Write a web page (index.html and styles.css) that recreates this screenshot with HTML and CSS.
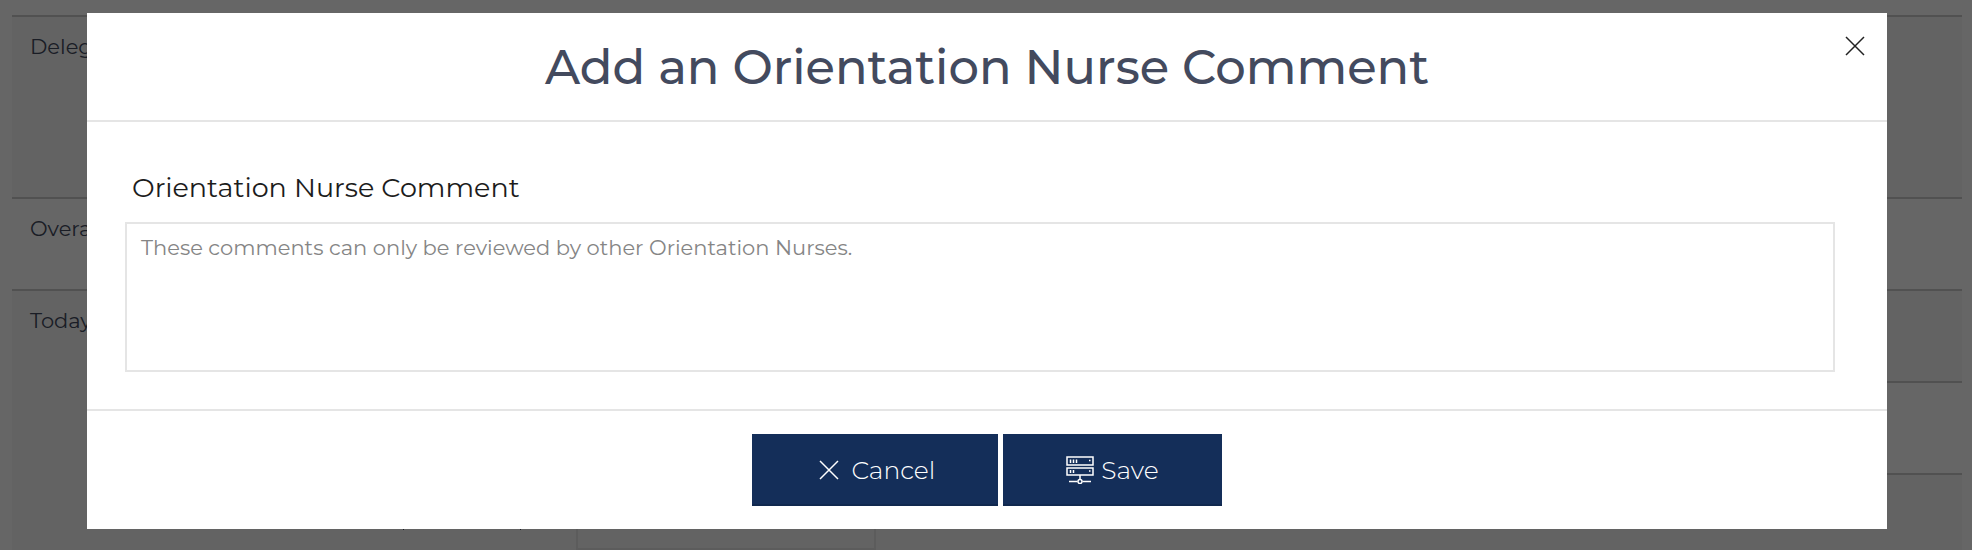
FILE: index.html
```html
<!DOCTYPE html>
<html lang="en">
<head>
<meta charset="utf-8">
<title>Add an Orientation Nurse Comment</title>
<link rel="stylesheet" href="styles.css">
</head>
<body>
<main class="page">
  <table class="record">
    <tr class="record-row tall striped"><th scope="row">Delegation</th><td></td></tr>
    <tr class="record-row"><th scope="row">Overall</th><td></td></tr>
    <tr class="record-row striped"><th scope="row" rowspan="3">Today</th><td></td></tr>
    <tr class="record-row"><td></td></tr>
    <tr class="record-row striped last"><td><div class="reading"><span class="reading-mark"></span><input class="reading-input" type="text" aria-label="Reading"></div></td></tr>
  </table>
</main>
<div class="overlay">
  <form class="modal" role="dialog" aria-labelledby="modal-title">
    <header class="modal-header">
      <h1 class="modal-title" id="modal-title">Add an Orientation Nurse Comment</h1>
      <button class="close" type="button" aria-label="Close">
        <svg class="close-icon" viewBox="0 0 20 20" aria-hidden="true"><path d="M1 1 19 19M19 1 1 19"/></svg>
      </button>
    </header>
    <div class="modal-body">
      <label class="field-label" for="comment">Orientation Nurse Comment</label>
      <textarea class="field" id="comment" placeholder="These comments can only be reviewed by other Orientation Nurses."></textarea>
    </div>
    <footer class="modal-footer">
      <button class="button cancel" type="button">
        <svg class="cancel-icon" viewBox="0 0 20 20" aria-hidden="true"><path d="M1 1 19 19M19 1 1 19"/></svg>
        Cancel
      </button>
      <button class="button save" type="submit">
        <svg class="save-icon" viewBox="0 0 28 28" aria-hidden="true">
          <path d="M1 1H27V9H1ZM1 12H27V19H1ZM14 19V23M3 25.500H11.500M16.500 25.500H25"/>
          <circle cx="14" cy="25.500" r="2"/>
          <path d="M4.500 3.500V7M7.500 3.500V7M10.500 3.500V7M4.500 14V17M7.500 14V17M23 4.500H24.500M23 15H24.500"/>
        </svg>
        Save
      </button>
    </footer>
  </form>
</div>
</body>
</html>
```
FILE: styles.css
```css
* { box-sizing: border-box; }

body {
  margin: 0;
  height: 100vh;
  overflow: hidden;
  background: #fff;
  color: #434a5e;
  font-family: Montserrat, Inter, "Open Sans", sans-serif;
}

.page { padding: 15px 10px 0 12px; }

.record {
  width: 100%;
  border-spacing: 0;
  font-size: 21px;
  line-height: 26px;
}

.record-row { height: 92px; }
.record-row.tall { height: 182px; }
.record-row.striped th,
.record-row.striped td { background: #f8f8f8; }

.record th,
.record td {
  padding: 17px 18px;
  border-top: 2px solid #cbcbcb;
  font-weight: 400;
  text-align: left;
  vertical-align: top;
}

.record th { width: 18%; }
.record .last td { padding: 0; }

.reading {
  display: flex;
  align-items: flex-start;
  gap: 55px;
}

.reading-mark {
  width: 118px;
  height: 55px;
  margin-left: 40px;
  border: solid #434a5e;
  border-width: 0 1px;
}

.reading-input {
  width: 300px;
  height: 75px;
  border: 2px solid #e5e5e5;
  background: transparent;
}

.overlay {
  position: fixed;
  inset: 0;
  padding: 13px 85px 0 87px;
  background: rgba(0, 0, 0, 0.6);
}

.modal { background: #fff; }

.modal-header {
  position: relative;
  padding: 25px 64px 23px;
  border-bottom: 2px solid #e5e5e5;
}

.modal-title {
  margin: 0;
  font-size: 48px;
  font-weight: 500;
  line-height: 59px;
  text-align: center;
}

.close {
  position: absolute;
  top: 20px;
  right: 19px;
  display: flex;
  padding: 3px;
  border: 0;
  background: none;
  color: #222;
}

.close-icon,
.cancel-icon,
.save-icon {
  fill: none;
  stroke: currentColor;
  stroke-width: 1.5;
}

.close-icon { width: 20px; height: 20px; }

.modal-body {
  padding: 48px 52px 37px 38px;
  border-bottom: 2px solid #e5e5e5;
}

.field-label {
  display: block;
  padding: 0 7px;
  margin-bottom: 16px;
  color: #1c1c1c;
  font-size: 27px;
  line-height: 36px;
}

.field {
  display: block;
  width: 100%;
  height: 150px;
  padding: 10px 14px;
  border: 2px solid #e5e5e5;
  background: #fff;
  color: #222;
  font: 400 21px/28px Montserrat, Inter, "Open Sans", sans-serif;
  resize: none;
}

.field::placeholder { color: #858585; }

.modal-footer {
  display: flex;
  justify-content: center;
  gap: 5px;
  padding: 23px;
}

.button {
  display: flex;
  align-items: center;
  height: 72px;
  padding: 2px 63px 0;
  border: 0;
  border-bottom: 2px solid #10284e;
  background: #142e59;
  color: #fff;
  font: 300 25px/32px Montserrat, Inter, "Open Sans", sans-serif;
}

.cancel { gap: 12px; padding-left: 67px; }
.save { gap: 7px; }
.cancel-icon { width: 20px; height: 20px; }
.save-icon { width: 28px; height: 28px; }
```
